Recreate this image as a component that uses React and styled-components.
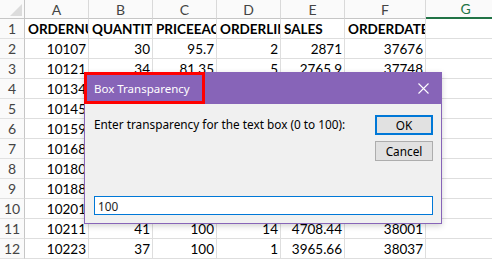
import { Fragment } from 'react';
import styled, { createGlobalStyle } from 'styled-components';

const GlobalStyle = createGlobalStyle`
  body {
    margin: 0;
    background: #fff;
  }
`;

const Page = styled.div`
  position: relative;
  width: 492px;
  height: 260px;
  overflow: hidden;
  background: #fff;
`;

const Grid = styled.div`
  display: grid;
  grid-template-columns: 25px 64px 64px 64px 64px 64px 81px 80px;
  grid-template-rows: 19px repeat(12, 20px);
  font-family: Lato, "Liberation Sans", sans-serif;
  font-size: 13.5px;
`;

const Corner = styled.div`
  position: relative;
  background: #fafafa;
  border-right: 1px solid #c6c6c6;
  border-bottom: 1px solid #c6c6c6;
  &::after {
    content: '';
    position: absolute;
    right: 2px;
    bottom: 2px;
    border-left: 12px solid transparent;
    border-bottom: 12px solid #dcdcdc;
  }
`;

const ColHead = styled.div`
  display: flex;
  align-items: center;
  justify-content: center;
  background: #fafafa;
  color: ${p => (p.$active ? '#217346' : '#444')};
  border-right: 1px solid #d9d9d9;
  border-bottom: ${p => (p.$active ? '2px solid #217346' : '1px solid #c6c6c6')};
  font-size: 14px;
`;

const RowHead = styled.div`
  display: flex;
  align-items: center;
  justify-content: center;
  background: #fafafa;
  color: #444;
  border-right: 1px solid #c6c6c6;
  border-bottom: 1px solid #e1e1e1;
  font-size: 14px;
`;

const Cell = styled.div`
  display: flex;
  align-items: center;
  justify-content: ${p => (p.$head ? 'flex-start' : 'flex-end')};
  padding: 0 2px 0 3px;
  overflow: hidden;
  white-space: nowrap;
  color: #000;
  font-weight: ${p => (p.$head ? 700 : 400)};
  border-right: 1px solid #dedede;
  border-bottom: 1px solid #dedede;
`;

const Dialog = styled.div`
  position: absolute;
  left: 84px;
  top: 72px;
  width: 358px;
  height: 152px;
  box-sizing: border-box;
  display: flex;
  flex-direction: column;
  border: 1px solid #8764b8;
  background: #f0f0f0;
  box-shadow: 0 2px 6px rgba(0, 0, 0, 0.18);
  font-family: "Noto Sans", "Liberation Sans", sans-serif;
  font-size: 11.8px;
  color: #000;
`;

const TitleBar = styled.div`
  position: relative;
  height: 31px;
  flex: none;
  display: flex;
  align-items: center;
  justify-content: space-between;
  padding: 0 6px 0 9px;
  background: #8764b8;
  color: #fff;
  font-size: 11.5px;
`;

const Highlight = styled.div`
  position: absolute;
  left: -1px;
  top: -1px;
  width: 121px;
  height: 32px;
  box-sizing: border-box;
  border: 3px solid #ff0000;
`;

const CloseBtn = styled.div`
  width: 24px;
  height: 24px;
  display: flex;
  align-items: center;
  justify-content: center;
`;

const Body = styled.div`
  flex: 1;
  display: flex;
  flex-direction: column;
  justify-content: space-between;
  padding: 11px 8px 8px 9px;
`;

const TopRow = styled.div`
  display: flex;
  justify-content: space-between;
`;

const Prompt = styled.div`
  padding-top: 1px;
  line-height: 16px;
`;

const Buttons = styled.div`
  display: flex;
  flex-direction: column;
  gap: 6px;
`;

const Button = styled.div`
  width: 58px;
  height: 20px;
  box-sizing: border-box;
  display: flex;
  align-items: center;
  justify-content: center;
  background: #e1e1e1;
  border: ${p => (p.$default ? '2px solid #0078d7' : '1px solid #adadad')};
`;

const Input = styled.div`
  height: 19px;
  box-sizing: border-box;
  display: flex;
  align-items: center;
  padding: 0 3px;
  background: #fff;
  border: 1px solid #0078d7;
  color: #1e1e1e;
`;

const cols = ['A', 'B', 'C', 'D', 'E', 'F', 'G'];

const rows = [
  ['ORDERNUMBER', 'QUANTITYORDERED', 'PRICEEACH', 'ORDERLINENUMBER', 'SALES', 'ORDERDATE'],
  ['10107', '30', '95.7', '2', '2871', '37676'],
  ['10121', '34', '81.35', '5', '2765.9', '37748'],
  ['10134', '41', '94.74', '2', '3884.34', '37803'],
  ['10145', '45', '83.26', '6', '3746.7', '37858'],
  ['10159', '49', '100', '14', '5205.27', '37904'],
  ['10168', '36', '96.66', '1', '3479.76', '37922'],
  ['10180', '29', '86.13', '9', '2497.77', '37936'],
  ['10188', '48', '100', '1', '5512.32', '37943'],
  ['10201', '22', '98.57', '2', '2168.54', '37956'],
  ['10211', '41', '100', '14', '4708.44', '38001'],
  ['10223', '37', '100', '1', '3965.66', '38037'],
];

const App = () => (
  <Page>
    <GlobalStyle />
    <Grid>
      <Corner />
      {cols.map(c => (
        <ColHead key={c} $active={c === 'G'}>{c}</ColHead>
      ))}
      {rows.map((r, i) => (
        <Fragment key={i}>
          <RowHead>{i + 1}</RowHead>
          {r.map((v, j) => (
            <Cell key={j} $head={i === 0}>{v}</Cell>
          ))}
          <Cell />
        </Fragment>
      ))}
    </Grid>

    <Dialog>
      <TitleBar>
        <span>Box Transparency</span>
        <Highlight />
        <CloseBtn>
          <svg width="11" height="11" viewBox="0 0 11 11">
            <path d="M0.5 0.5 L10.5 10.5 M10.5 0.5 L0.5 10.5" stroke="#fff" strokeWidth="1.1" />
          </svg>
        </CloseBtn>
      </TitleBar>
      <Body>
        <TopRow>
          <Prompt>Enter transparency for the text box (0 to 100):</Prompt>
          <Buttons>
            <Button $default>OK</Button>
            <Button>Cancel</Button>
          </Buttons>
        </TopRow>
        <Input>100</Input>
      </Body>
    </Dialog>
  </Page>
);

export default App;
